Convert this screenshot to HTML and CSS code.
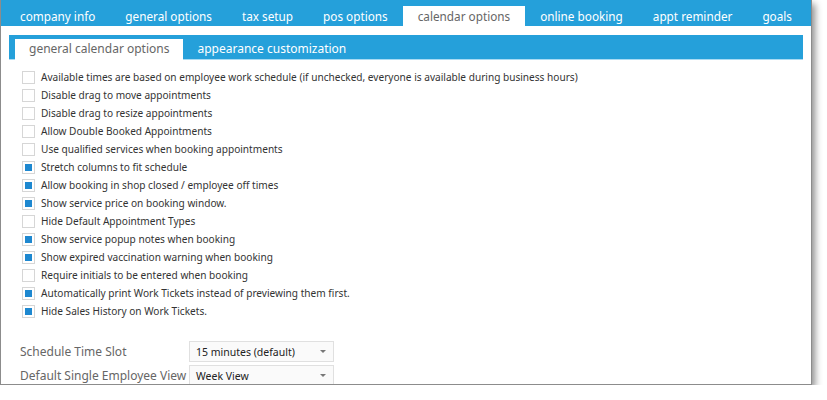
FILE: index.html
```html
<!DOCTYPE html>
<html lang="en">
<head>
    <meta charset="UTF-8">
    <title>Calendar Options</title>
    <link rel="stylesheet" href="styles.css">
</head>
<body>
    <div class="window">
        <nav class="tabs">
            <a href="#company">company info</a>
            <a href="#general">general options</a>
            <a href="#tax">tax setup</a>
            <a href="#pos">pos options</a>
            <a href="#calendar" class="active">calendar options</a>
            <a href="#online">online booking</a>
            <a href="#reminder">appt reminder</a>
            <a href="#goals">goals</a>
        </nav>

        <div class="panel">
            <nav class="subtabs">
                <a href="#general-calendar" class="active">general calendar options</a>
                <a href="#appearance">appearance customization</a>
            </nav>

            <ul class="options">
                <li><span class="check"></span>Available times are based on employee work schedule (if unchecked, everyone is available during business hours)</li>
                <li><span class="check"></span>Disable drag to move appointments</li>
                <li><span class="check"></span>Disable drag to resize appointments</li>
                <li><span class="check"></span>Allow Double Booked Appointments</li>
                <li><span class="check"></span>Use qualified services when booking appointments</li>
                <li><span class="check on"></span>Stretch columns to fit schedule</li>
                <li><span class="check on"></span>Allow booking in shop closed / employee off times</li>
                <li><span class="check on"></span>Show service price on booking window.</li>
                <li><span class="check"></span>Hide Default Appointment Types</li>
                <li><span class="check on"></span>Show service popup notes when booking</li>
                <li><span class="check on"></span>Show expired vaccination warning when booking</li>
                <li><span class="check"></span>Require initials to be entered when booking</li>
                <li><span class="check on"></span>Automatically print Work Tickets instead of previewing them first.</li>
                <li><span class="check on"></span>Hide Sales History on Work Tickets.</li>
            </ul>

            <div class="fields">
                <div class="field">
                    <label>Schedule Time Slot</label>
                    <div class="dropdown"><span>15 minutes (default)</span><i class="arrow"></i></div>
                </div>
                <div class="field">
                    <label>Default Single Employee View</label>
                    <div class="dropdown"><span>Week View</span><i class="arrow"></i></div>
                </div>
            </div>
        </div>
    </div>
</body>
</html>
```

FILE: styles.css
```css
body {
    margin: 0;
    padding: 0;
    background-color: #ffffff;
    font-family: "Noto Sans", sans-serif;
}
.window {
    width: 810px;
    height: 384px;
    border: 1px solid #8c8c8c;
    border-top: none;
    background: #fff;
    box-shadow: 3px 4px 7px rgba(0, 0, 0, 0.45);
    overflow: hidden;
}
.tabs {
    display: flex;
    align-items: flex-end;
    height: 26px;
    padding-left: 4px;
    background-color: #25a0da;
}
.tabs a {
    display: block;
    flex-shrink: 0;
    white-space: nowrap;
    height: 20px;
    line-height: 21px;
    padding: 0 15px;
    color: #fff;
    text-decoration: none;
    font-size: 11.75px;
}
.tabs a.active {
    background: #fff;
    color: #666;
}
.panel {
    padding: 9px 8px 0 8px;
}
.subtabs {
    display: flex;
    align-items: flex-end;
    height: 24px;
    padding-left: 6px;
    background-color: #25a0da;
    border-bottom: 1px solid #a9dbf3;
}
.subtabs a {
    display: block;
    flex-shrink: 0;
    white-space: nowrap;
    height: 20px;
    line-height: 20px;
    padding: 0 14px;
    color: #fff;
    text-decoration: none;
    font-size: 12px;
}
.subtabs a.active {
    background: #fff;
    color: #666;
    margin-bottom: -1px;
    height: 21px;
}
.options {
    list-style: none;
    margin: 0;
    padding: 8px 0 0 13px;
}
.options li {
    display: flex;
    align-items: center;
    height: 18px;
    font-size: 10.1px;
    color: #333;
    white-space: nowrap;
}
.check {
    box-sizing: border-box;
    flex-shrink: 0;
    width: 13px;
    height: 13px;
    margin-right: 6px;
    border: 1px solid #d6d6d6;
    background: #fff;
    display: flex;
    align-items: center;
    justify-content: center;
}
.check.on::after {
    content: "";
    width: 7px;
    height: 7px;
    background: #1e88d0;
}
.fields {
    padding: 21px 0 0 11px;
}
.field {
    display: flex;
    align-items: center;
    margin-bottom: 3px;
}
.field label {
    width: 169px;
    font-size: 12px;
    color: #666;
}
.dropdown {
    box-sizing: border-box;
    display: flex;
    align-items: center;
    justify-content: space-between;
    width: 145px;
    height: 21px;
    padding: 0 7px 0 6px;
    border: 1px solid #e0e0e0;
    background: #fafafa;
    font-size: 10.5px;
    color: #222;
}
.arrow {
    width: 0;
    height: 0;
    border-left: 3px solid transparent;
    border-right: 3px solid transparent;
    border-top: 3px solid #777;
}
```
